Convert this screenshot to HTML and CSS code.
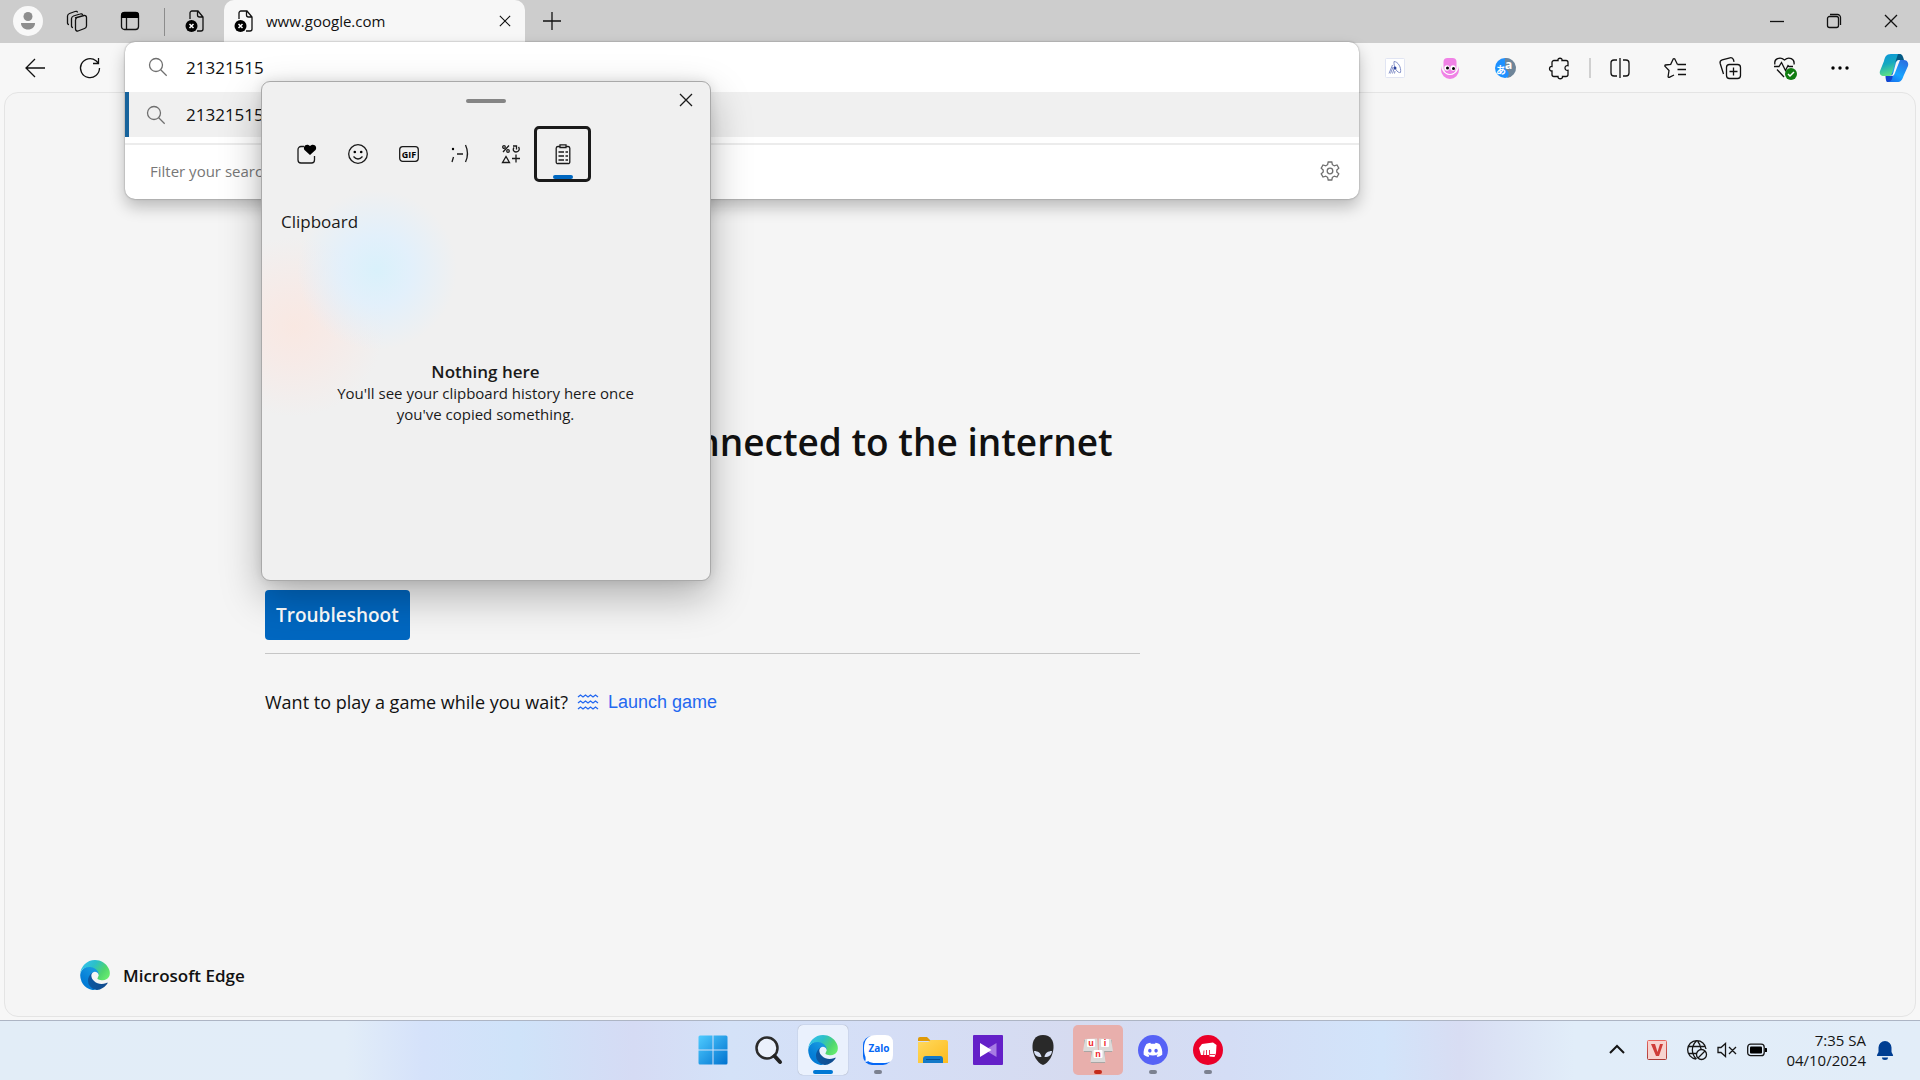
FILE: index.html
```html
<!DOCTYPE html>
<html lang="en">
<head>
<meta charset="utf-8">
<meta name="viewport" content="width=device-width, initial-scale=1">
<title>www.google.com</title>
<link rel="stylesheet" href="styles.css">
</head>
<body>
<svg class="defs" aria-hidden="true">
  <defs>
    <linearGradient id="edge-a" x1="0" y1="0" x2="1" y2="0"><stop offset="0" stop-color="#0c59a4"/><stop offset="1" stop-color="#114a8b"/></linearGradient>
    <linearGradient id="edge-b" x1="1" y1="0" x2="0.3" y2="1"><stop offset="0" stop-color="#1b9de2"/><stop offset="0.3" stop-color="#1595df"/><stop offset="0.7" stop-color="#0680d7"/><stop offset="1" stop-color="#0078d4"/></linearGradient>
    <linearGradient id="edge-c" x1="0" y1="0.2" x2="1" y2="0.7"><stop offset="0" stop-color="#35c1f1"/><stop offset="0.4" stop-color="#2cc0c8"/><stop offset="0.75" stop-color="#4fd56f"/><stop offset="1" stop-color="#66eb6e"/></linearGradient>
    <linearGradient id="win" x1="0" y1="0" x2="1" y2="1"><stop offset="0" stop-color="#4fcbff"/><stop offset="1" stop-color="#0072cf"/></linearGradient>
    <linearGradient id="folder" x1="0" y1="0" x2="1" y2="1"><stop offset="0" stop-color="#ffd95e"/><stop offset="1" stop-color="#fdbb1d"/></linearGradient>
    <linearGradient id="cop-a" x1="0" y1="0" x2="0.3" y2="1"><stop offset="0" stop-color="#0a95dc"/><stop offset="0.5" stop-color="#16a9c0"/><stop offset="1" stop-color="#5fe084"/></linearGradient>
    <linearGradient id="cop-b" x1="0.8" y1="0" x2="0.2" y2="1"><stop offset="0" stop-color="#2c6fe0"/><stop offset="0.6" stop-color="#18a4ff"/><stop offset="1" stop-color="#1670ee"/></linearGradient>
    <linearGradient id="unikey" x1="0" y1="0" x2="0" y2="1"><stop offset="0" stop-color="#e8665f"/><stop offset="1" stop-color="#a93a36"/></linearGradient>
    <symbol id="edge" viewBox="4 0 257 259">
      <path fill="url(#edge-a)" d="M235.68 195.46a93.73 93.73 0 0 1-10.54 4.71 101.87 101.87 0 0 1-35.9 6.46c-47.32 0-88.54-32.55-88.54-74.32A31.48 31.48 0 0 1 117.13 105c-42.8 1.8-53.8 46.4-53.8 72.53 0 73.88 68.09 81.37 82.76 81.37 7.91 0 19.84-2.3 27-4.56l1.31-.44a128.34 128.34 0 0 0 66.6-52.8 4 4 0 0 0-5.32-5.64Z"/>
      <path fill="url(#edge-b)" d="M110.34 246.34A79.2 79.2 0 0 1 87.6 225a80.72 80.72 0 0 1 29.53-120c3.12-1.47 8.45-4.13 15.54-4a32.35 32.35 0 0 1 25.69 13 31.88 31.88 0 0 1 6.36 18.66c0-.21 24.46-79.6-80-79.6-43.9 0-80 41.66-80 78.21a130.15 130.15 0 0 0 12.11 56 128 128 0 0 0 156.38 67.11 75.55 75.55 0 0 1-62.78-8Z"/>
      <path fill="url(#edge-c)" d="M156.94 153.78c-.81 1.05-3.3 2.5-3.3 5.66 0 2.61 1.7 5.12 4.72 7.23 14.38 10 41.49 8.68 41.56 8.68a59.56 59.56 0 0 0 30.27-8.35 61.38 61.38 0 0 0 30.43-52.88c.26-22.41-8-37.31-11.34-43.91C228.09 28.76 182.35.2 132.61.2a128 128 0 0 0-128 126.2c.48-36.54 36.8-66.05 80-66.05 3.5 0 23.46.34 42 10.07 16.34 8.58 24.9 18.94 30.85 29.21 6.18 10.67 7.28 24.15 7.28 29.52s-2.74 13.33-7.8 19.83Z"/>
    </symbol>
    <symbol id="page-error" viewBox="0 0 20 24">
      <path class="ln" d="M5 10V4a2 2 0 0 1 2-2h6l5 6v12a2 2 0 0 1-2 2h-4M12.500 2v4a2 2 0 0 0 2 2H18"/>
      <circle cx="6.500" cy="17" r="6" fill="#000"/>
      <path d="m4.500 15 4 4m0-4-4 4" stroke="#fff" stroke-width="1.500"/>
    </symbol>
    <symbol id="search" viewBox="0 0 20 20"><circle class="ln" cx="8" cy="8" r="6.500"/><path class="ln" d="m12.700 12.700 6 6"/></symbol>
    <symbol id="cross" viewBox="0 0 14 14"><path class="ln" d="m1 1 12 12M13 1 1 13"/></symbol>
  </defs>
</svg>

<header class="tabstrip">
  <button class="profile" aria-label="Profile"><svg viewBox="0 0 30 30"><circle cx="15" cy="15" r="15" fill="#f8f8f8"/><circle cx="15" cy="10.500" r="4.500" fill="#8e8e8e"/><path d="M8 17h14c0 4-3 6.500-7 6.500S8 21 8 17Z" fill="#8e8e8e"/></svg></button>
  <button class="strip-button" aria-label="Workspaces"><svg class="i22" viewBox="0 0 22 22"><path class="ln" d="m9 8 9-2.500a2 2 0 0 1 2.500 2V16a3 3 0 0 1-2 2.500L12 21a2 2 0 0 1-2.500-2V10a3 3 0 0 1 2-2.500M7 17.500c-1 0-1.500-.5-1.500-1.500V8.500a3 3 0 0 1 2-2.500L14 4c1.500-.5 2.500 0 2.500 1M3 14.500c-1 0-1.500-.5-1.500-1.500V6a3 3 0 0 1 2-2.500L9 1.500c1.500-.5 2.500 0 2.500 1"/></svg></button>
  <button class="strip-button" aria-label="Tab actions"><svg class="i20" viewBox="0 0 20 20"><rect class="ln" x="1.500" y="1.500" width="17" height="17" rx="3"/><path d="M1 7V4a3 3 0 0 1 3-3h12a3 3 0 0 1 3 3v3Z"/><path class="ln" d="M6.500 7v11"/></svg></button>
  <span class="strip-rule"></span>
  <button class="pinned-tab" aria-label="Pinned tab"><svg class="page-icon"><use href="#page-error"/></svg></button>
  <div class="tab">
    <svg class="page-icon"><use href="#page-error"/></svg>
    <span class="tab-title">www.google.com</span>
    <button class="tab-close" aria-label="Close tab"><svg class="i12 bold"><use href="#cross"/></svg></button>
  </div>
  <button class="new-tab" aria-label="New tab"><svg class="i18" viewBox="0 0 18 18"><path class="ln" d="M9 0v18M0 9h18"/></svg></button>
  <div class="window-controls">
    <button aria-label="Minimize"><svg class="i14" viewBox="0 0 14 14"><path class="ln" d="M0 7.500h14"/></svg></button>
    <button aria-label="Restore"><svg class="i14" viewBox="0 0 14 14"><rect class="ln" x=".5" y="2.500" width="11" height="11" rx="2"/><path class="ln" d="M3 .5h7.500a3 3 0 0 1 3 3V11"/></svg></button>
    <button aria-label="Close"><svg class="i14"><use href="#cross"/></svg></button>
  </div>
</header>

<nav class="toolbar">
  <button aria-label="Back"><svg class="i20" viewBox="0 0 20 20"><path class="ln" d="M20 10H1m9-9-9 9 9 9"/></svg></button>
  <button aria-label="Refresh"><svg class="i22" viewBox="0 0 22 22"><path class="ln" d="M20.500 11A9.500 9.500 0 1 1 17 3.700l2 2M19.500 1v5.500H14"/></svg></button>
  <div class="address">
    <div class="omnibox">
      <div class="omni-row">
        <svg class="i20 grey"><use href="#search"/></svg>
        <input type="text" value="21321515" aria-label="Search or enter web address">
      </div>
      <a class="omni-row suggestion" href="#"><svg class="i20 grey"><use href="#search"/></svg>21321515</a>
      <div class="omni-footer">
        <span>Filter your search</span>
        <button aria-label="Suggestion settings"><svg class="i20 grey" viewBox="0 0 20 20"><circle class="ln" cx="10" cy="10" r="2.800"/><path class="ln" d="M8.200 1h3.600l.6 2.700 1.900 1.100 2.700-.8 1.800 3.100-2 1.900v2l2 1.900-1.800 3.100-2.700-.8-1.900 1.100-.6 2.700H8.200l-.6-2.700-1.900-1.100-2.700.8-1.800-3.100 2-1.900V9l-2-1.900L3 4l2.700.8 1.900-1.100Z"/></svg></button>
      </div>
    </div>
  </div>
  <button aria-label="Reader extension"><svg class="i20" viewBox="0 0 20 20"><rect x=".5" y=".5" width="19" height="19" rx="1" fill="#fff" stroke="#e1e5f3"/><path d="M9 3.500c4 0 7.500 6 6.500 11-3 1-7-5-6.500-11ZM7.500 7 4 15.500M8 9l-2.500 6.500M9 11l-1.500 4.500M10 13l-.5 2.500" fill="none" stroke="#8491c8"/><circle cx="10" cy="10" r="1.500" fill="#2c429c"/></svg></button>
  <button aria-label="Voice extension"><svg class="i20" viewBox="0 0 20 20"><path d="M1 8a9 9 0 0 0 18 0v4a9 9 0 0 1-18 0Z" fill="#f082e6"/><path d="M8 17h4v3H8Z" fill="#f082e6"/><path d="M3.500 4a4 4 0 0 1 4-4h5a4 4 0 0 1 4 4v5c0 5-3 7-6.500 7s-6.500-2-6.500-7Z" fill="#f082e6"/><circle cx="7" cy="10" r="2.700" fill="#fff"/><circle cx="13" cy="10" r="2.700" fill="#fff"/><circle cx="7.500" cy="10" r="1.500"/><circle cx="13.500" cy="10.500" r="1.500"/><path d="M3.500 11.500q1.500 5 6.500 5t6.500-5" stroke="#fff" fill="none"/></svg></button>
  <button aria-label="Translate extension"><svg class="i20" viewBox="0 0 20 20"><circle cx="10" cy="10" r="10" fill="#1e90ff"/><path d="M10 0a10 10 0 0 1 2 20c3-4 2-7-2-9Z" fill="#6f8599"/><text class="kana" x="1" y="16">あ</text><text class="latin" x="10" y="11">a</text></svg></button>
  <button aria-label="Extensions"><svg class="i22" viewBox="0 0 22 22"><path class="ln" d="M5 3.500h4C8.300.5 13.700.5 13 3.500h4a2 2 0 0 1 2 2v3.200c-4-1-4 5.600 0 4.600v4.200a2 2 0 0 1-2 2h-3.500c.5 3-5 3-4.500 0H5a2 2 0 0 1-2-2V14c-3.300.4-3.300-5 0-4.500v-4a2 2 0 0 1 2-2Z"/></svg></button>
  <span class="tool-rule"></span>
  <button aria-label="Split screen"><svg class="i20" viewBox="0 0 20 20"><path class="ln" d="M7 2H4a3 3 0 0 0-3 3v10a3 3 0 0 0 3 3h3M13 2h3a3 3 0 0 1 3 3v10a3 3 0 0 1-3 3h-3M10 0v20"/></svg></button>
  <button aria-label="Favorites"><svg class="i22" viewBox="0 0 22 22"><path class="ln" d="m13.500 7.500-2.700-5.500a1 1 0 0 0-1.600 0L6.700 7.300 1.500 8a.8.800 0 0 0-.4 1.400L5 13.500l-.9 6a.8.800 0 0 0 1.200.8L10 18M13.500 7.500H22M13.500 12.500H22M14 17.500h8"/></svg></button>
  <button aria-label="Collections"><svg class="i22" viewBox="0 0 22 22"><rect class="ln" x="7.500" y="7.500" width="14" height="14" rx="3"/><path class="ln" d="M14.500 10.500v8m-4-4h8M4.500 17 1.200 6.500a3 3 0 0 1 2-3.700L11 .8a3 3 0 0 1 3.500 2l.5 2"/></svg></button>
  <button aria-label="Browser essentials"><svg class="i24" viewBox="0 0 24 24"><path class="ln" d="M2 8.500C.5 3 7 0 11.500 4 16 0 22 3 21 8.500M1 10.500h5l2.500-4 4 8 2.500-5 1 1h4M4 13.500l7 7.500"/><circle cx="18" cy="18" r="6" fill="#107c10"/><path d="m15 18 2 2 4-4" fill="none" stroke="#fff" stroke-width="1.500"/></svg></button>
  <button aria-label="Settings and more"><svg class="i18" viewBox="0 0 18 18"><circle cx="2" cy="9" r="1.700"/><circle cx="9" cy="9" r="1.700"/><circle cx="16" cy="9" r="1.700"/></svg></button>
  <button class="copilot" aria-label="Copilot"><svg class="i30" viewBox="0 0 30 30"><path d="M21 1h-9C7 1 6 4 5 8L1 18c-1 3 1 5 4 5h5c3 0 4-2 5-5l4-12c1-2 2-2 4-2-.5-2-1-3-2-3Z" fill="url(#cop-a)"/><path d="M19 1h2c2 0 3 2 4 6h-5c-2 0-3 1-4 3Z" fill="#055a85"/><path d="M8 29h10c4 0 5-2 6.500-6L29 13c1-3-1-6-4-6h-4c-3 0-4 1-5 4l-4 12c-1 2-2 2-5 1 .5 3 .5 4 1 5Z" fill="url(#cop-b)"/><path d="M9 23h3l3-5-2 8c-1 2-2 3-5 3-1-1-1.500-4-1.500-6Z" fill="#1444ce"/><path d="M17 9.500c1-2 2-2.500 4-2.500l-5.500 14c-1 2-2 2-4 2 2-1 2.500-2 3-4Z" fill="#f7f7f7"/></svg></button>
</nav>

<main class="page">
  <section class="message">
    <h1>Right now, you're not connected to the internet</h1>
    <button class="troubleshoot">Troubleshoot</button>
    <p class="game">Want to play a game while you wait?
      <a href="#"><svg class="waves" viewBox="0 0 20 16"><path class="ln" d="m0 3 2.500-2L5 3l2.500-2L10 3l2.500-2L15 3l2.500-2L20 3M0 9l2.500-2L5 9l2.500-2L10 9l2.500-2L15 9l2.500-2L20 9M0 15l2.500-2L5 15l2.500-2L10 15l2.500-2L15 15l2.500-2L20 15"/></svg>Launch game</a></p>
  </section>
  <footer class="brand"><svg class="i30"><use href="#edge"/></svg>Microsoft Edge</footer>
</main>

<section class="panel" aria-label="Clipboard">
  <span class="handle"></span>
  <button class="panel-close" aria-label="Close"><svg class="i14"><use href="#cross"/></svg></button>
  <div class="panel-tabs">
    <button aria-label="Recent"><svg class="i20" viewBox="0 0 20 20"><path class="ln" d="M7 2.500H4a3 3 0 0 0-3 3V16a3 3 0 0 0 3 3h10.500a3 3 0 0 0 3-3v-4"/><path d="M13 11 7.500 6C5.500 3 9-1.500 13 2c4-3.500 7.800 1 5.500 4Z"/></svg></button>
    <button aria-label="Emoji"><svg class="i20" viewBox="0 0 20 20"><circle class="ln" cx="10" cy="10" r="9.300"/><circle cx="6.800" cy="8" r="1.300"/><circle cx="13.200" cy="8" r="1.300"/><path class="ln" d="M5.500 12.500q4.500 5 9 0"/></svg></button>
    <button aria-label="GIF"><svg class="i20" viewBox="0 0 20 20"><rect class="ln" x=".7" y="2.700" width="18.600" height="14.600" rx="3"/><text class="gif" x="10" y="13.500">GIF</text></svg></button>
    <button aria-label="Kaomoji"><svg class="i20" viewBox="0 0 20 20"><circle cx="3" cy="5" r="1.200"/><path class="ln" d="M3.500 13 2 18M7 10h6M15.500 1q4 8.500 0 17"/></svg></button>
    <button aria-label="Symbols"><svg class="i20" viewBox="0 0 20 20"><path class="ln" d="m2 8 6-6.500M1.500 18.500h7l-3.500-6ZM11 14.500h8m-4-4v8M12 2h3.500v3.500M13 3.500c-1.500 2-.5 4.500 2 4.500 3 0 4-3 2.500-5"/><circle class="ln" cx="3" cy="3" r="1.300"/><circle class="ln" cx="7" cy="7" r="1.300"/></svg></button>
    <button class="selected" aria-label="Clipboard history"><svg class="i20" viewBox="0 0 20 20"><path class="ln" d="M6.500 2.500H5A1.800 1.800 0 0 0 3.200 4v14A1.500 1.500 0 0 0 5 19.500h10a1.500 1.500 0 0 0 1.800-1.500V4A1.800 1.800 0 0 0 15 2.500h-1.500M7 .8h6v2.700H7ZM5.500 8H11M5.500 12H11M5.500 16H11M12.500 8h2.500M12.500 12h2.500M12.500 16h2.500"/></svg></button>
  </div>
  <h2>Clipboard</h2>
  <div class="empty"><strong>Nothing here</strong><p>You'll see your clipboard history here once you've copied something.</p></div>
</section>

<footer class="taskbar">
  <div class="apps">
    <button aria-label="Start"><svg class="i30" viewBox="0 0 30 30"><path d="M2 .5h12.500v14H.5V2A1.500 1.500 0 0 1 2 .5ZM15.500.5H28A1.500 1.500 0 0 1 29.500 2v12.500h-14ZM.5 15.500h14v14H2A1.500 1.500 0 0 1 .5 28ZM15.500 15.500h14V28a1.500 1.500 0 0 1-1.500 1.500H15.500Z" fill="url(#win)"/></svg></button>
    <button aria-label="Search"><svg class="i30" viewBox="0 0 30 30"><circle cx="14" cy="13" r="10.500" fill="#fff8" stroke="#2b2b2b" stroke-width="2.500"/><path d="m21.500 21 5.500 6" stroke="#222" stroke-width="4" stroke-linecap="round"/></svg></button>
    <button class="active" aria-label="Microsoft Edge"><svg class="i30"><use href="#edge"/></svg></button>
    <button class="running" aria-label="Zalo"><svg class="i30" viewBox="0 0 30 30"><rect y="1" width="29" height="29" rx="9" fill="#0567f5"/><path d="M14 0h8q8 0 8 8v12q0 8-8 8h-9c-4 0-6-.5-8-2-1 1-2 1-3 .5Q3 25 2.500 22 1 19 1 13 1 0 14 0Z" fill="#fff"/><text class="zalo" x="16" y="17">Zalo</text></svg></button>
    <button aria-label="File Explorer"><svg class="i30" viewBox="0 0 30 30"><path d="M0 4a2 2 0 0 1 2-2h7l4 4H0Z" fill="#e09a06"/><path d="M0 7h10l3-2h15a2 2 0 0 1 2 2v21H0Z" fill="url(#folder)"/><path d="M5 28v-4a3 3 0 0 1 3-3h14a3 3 0 0 1 3 3v4Z" fill="#1479c7"/><path d="M8 24.500h14" stroke="#064e91"/></svg></button>
    <button aria-label="Media player"><svg class="i30" viewBox="0 0 30 30"><rect width="30" height="30" rx="1" fill="#6420c8"/><path d="M23.500 8v14L12 15Z" fill="#a77be4"/><path d="M7 8v14l11.500-7Z" fill="#fff"/></svg></button>
    <button aria-label="Alienware"><svg class="i30" viewBox="0 0 30 30"><path d="M15 0C7 0 4 6 4.500 13 5 20 9 28 15 30c6-2 10-10 10.500-17C26 6 23 0 15 0Z" fill="#292929"/><path d="M6 16c4 0 7 2 7.500 6-5 0-7-2-7.500-6ZM24 16c-4 0-7 2-7.500 6 5 0 7-2 7.500-6Z" fill="#d8e0f5"/></svg></button>
    <button class="alert" aria-label="UniKey"><svg class="i30" viewBox="0 0 30 30"><g fill="#a9a6a4"><path d="M1 5h13v12H1ZM16 5h13v12H16ZM8 16h14v12H8Z"/></g><g fill="#dcdad9"><path d="m2 4 12-.5L15 16H0ZM16 3.500 28 4l2 12H16ZM9 15h12l1.500 12h-15Z"/></g><g fill="#fff"><rect x="4" y="4" width="8" height="8" rx="1"/><rect x="18" y="4" width="8" height="8" rx="1"/><rect x="10.500" y="15" width="9" height="8" rx="1"/></g><text class="key" x="8" y="11">u</text><text class="key" x="22" y="11">i</text><text class="key" x="15" y="22">n</text></svg></button>
    <button class="running" aria-label="Discord"><svg class="i30" viewBox="0 0 30 30"><circle cx="15" cy="15" r="15" fill="#5662f6"/><path transform="translate(5.600 5.600) scale(.78)" fill="#fff" d="M20.317 4.370a19.791 19.791 0 0 0-4.885-1.515.74.074 0 0 0-.079.037c-.211.375-.445.865-.608 1.250-1.845-.276-3.680-.276-5.487 0-.164-.393-.406-.874-.618-1.250a.077.077 0 0 0-.079-.037 19.736 19.736 0 0 0-4.885 1.515.070.070 0 0 0-.032.028C.533 9.046-.319 13.580.099 18.058a.082.082 0 0 0 .031.056c2.053 1.508 4.041 2.423 5.993 3.029a.078.078 0 0 0 .084-.028c.462-.630.873-1.295 1.226-1.994a.076.076 0 0 0-.042-.106c-.653-.248-1.274-.550-1.872-.892a.077.077 0 0 1-.008-.128l.372-.291a.074.074 0 0 1 .078-.011c3.928 1.793 8.180 1.793 12.061 0a.074.074 0 0 1 .079.010l.373.292a.077.077 0 0 1-.007.128 12.299 12.299 0 0 1-1.873.891.077.077 0 0 0-.041.107c.360.698.772 1.363 1.225 1.993a.076.076 0 0 0 .084.029c1.961-.607 3.950-1.522 6.002-3.029a.077.077 0 0 0 .031-.055c.500-5.177-.838-9.674-3.549-13.660ZM8.020 15.331c-1.183 0-2.157-1.086-2.157-2.419s.956-2.419 2.157-2.419c1.211 0 2.176 1.095 2.157 2.419 0 1.333-.956 2.419-2.157 2.419Zm7.975 0c-1.183 0-2.157-1.086-2.157-2.419s.955-2.419 2.157-2.419c1.211 0 2.176 1.095 2.157 2.419 0 1.333-.946 2.419-2.157 2.419Z"/></svg></button>
    <button class="running" aria-label="Game client"><svg class="i30" viewBox="0 0 30 30"><circle cx="15" cy="15" r="15" fill="#eb0029"/><path d="m6 13 3-4 11-1.500L23.500 10l-.5 8-1.500 4-5-.5V20H8Z" fill="#fff"/><path d="m10.500 20.500.5-5M13.500 20.500V15M16.500 20v-5M17 19.500h5" fill="none" stroke="#eb0029" stroke-width=".8"/></svg></button>
  </div>
  <div class="tray">
    <button class="overflow" aria-label="Show hidden icons"><svg class="i14" viewBox="0 0 14 14"><path class="ln bold" d="m0 10 7-7 7 7"/></svg></button>
    <button class="unikey" aria-label="Vietnamese input"><svg class="i20" viewBox="0 0 20 20"><rect x=".5" y=".5" width="19" height="19" rx="1" fill="#f7d3cf" stroke="url(#unikey)"/><path d="M4 4h4l2.500 8L13 4h3l-4 12H9Z" fill="#cf3d38"/></svg></button>
    <button class="status" aria-label="Network, volume and battery">
      <svg class="i20" viewBox="0 0 20 20"><path class="ln" d="M19 9A9.200 9.200 0 1 0 9 19M1.500 6.500h17M1.500 13.500H9M9.500 1c-5.500 5-5.500 13 0 18M10.500 1q3 3.500 3.500 8"/><circle class="ln" cx="14.500" cy="14.500" r="5"/><path class="ln" d="m11 18 7-7"/></svg>
      <svg class="i20" viewBox="0 0 20 20"><path class="ln" d="M1 7.500h3l4.500-4v13L4 12.500H1ZM12 7l7 7m0-7-7 7"/></svg>
      <svg class="i20" viewBox="0 0 20 20"><rect class="ln" x=".7" y="4.200" width="16.500" height="11.500" rx="3"/><rect x="3" y="6.500" width="12" height="7" rx="1"/><path d="M18 8h1.500a.5.500 0 0 1 .5.500v3a.5.500 0 0 1-.5.500H18Z"/></svg>
    </button>
    <button class="clock"><time>7:35 SA</time><time>04/10/2024</time></button>
    <button class="bell" aria-label="Notifications"><svg class="i20" viewBox="0 0 20 20"><path d="M10 1a6.500 6.500 0 0 1 6.500 6.500V12l1.500 3a.7.700 0 0 1-.5 1h-15A.7.700 0 0 1 2 15l1.500-3V7.500A6.500 6.500 0 0 1 10 1ZM7 17.500h6a3 2.500 0 0 1-6 0Z" fill="#003e92"/></svg></button>
  </div>
</footer>
</body>
</html>
```
FILE: styles.css
```css
* { box-sizing: border-box; margin: 0; padding: 0; }
body {
  display: flex;
  flex-direction: column;
  min-height: 100vh;
  position: relative;
  background: #f7f7f7;
  color: #111;
  font-family: "Open Sans", "Noto Sans", sans-serif;
  font-size: 17px;
}
button {
  display: flex;
  align-items: center;
  justify-content: center;
  border: 0;
  background: none;
  color: inherit;
  font: inherit;
}
svg { display: block; flex: none; overflow: visible; }
a { text-decoration: none; color: inherit; }
.defs { position: absolute; width: 0; height: 0; }
.ln { fill: none; stroke: currentColor; stroke-width: 1.3; }
.bold, .bold .ln { stroke-width: 2; }
.i12 { width: 12px; height: 12px; }
.i14 { width: 14px; height: 14px; }
.i18 { width: 18px; height: 18px; }
.i20 { width: 20px; height: 20px; }
.i22 { width: 22px; height: 22px; }
.i24 { width: 24px; height: 24px; }
.i30 { width: 30px; height: 30px; }
.grey { color: #707070; }

/* Tab strip */
.tabstrip { display: flex; align-items: flex-start; height: 43px; background: #cdcdcd; }
.tabstrip button { height: 42px; }
.profile { width: 30px; margin: 0 9px 0 13px; }
.profile svg { width: 30px; height: 30px; }
.strip-button { width: 49px; margin-right: 4px; }
.strip-rule { width: 1px; height: 28px; margin: 8px 0 0 6px; background: #8c8c8c; }
.pinned-tab { width: 59px; }
.page-icon { width: 20px; height: 24px; }
.tab {
  display: flex;
  align-items: center;
  width: 301px;
  height: 43px;
  padding: 0 10px 2px;
  border-radius: 10px 10px 0 0;
  background: #f7f7f7;
}
.tab-title { flex: 1; margin-left: 12px; font-size: 15px; }
.tab-close { width: 20px; }
.new-tab { width: 54px; }
.window-controls { display: flex; margin: 0 1px 0 auto; }
.window-controls button { width: 57px; }

/* Toolbar */
.toolbar { display: flex; align-items: center; height: 49px; padding-left: 7px; }
.toolbar > button { width: 55px; height: 40px; }
.toolbar > .copilot { width: 53px; }
.tool-rule { width: 2px; height: 20px; margin: 0 1px 0 2px; background: #d0d0d0; }
.address { flex: 1; align-self: stretch; position: relative; margin: 0 8px; }
.omnibox {
  position: absolute;
  z-index: 2;
  top: -1px;
  left: 0;
  right: 0;
  overflow: hidden;
  border-radius: 10px;
  background: #fff;
  box-shadow: 0 0 2px rgba(0, 0, 0, .4), 0 8px 16px rgba(0, 0, 0, .24);
}
.omni-row { display: flex; align-items: center; gap: 18px; height: 50px; padding: 0 23px; }
.omni-row input { flex: 1; border: 0; outline: 0; background: none; color: #111; font: inherit; }
.suggestion { height: 45px; padding-left: 17px; border-left: 4px solid #17639c; background: #f0f0f0; gap: 20px; }
.omni-footer {
  display: flex;
  align-items: center;
  justify-content: space-between;
  height: 56px;
  margin-top: 6px;
  padding: 0 19px 2px 25px;
  border-top: 2px solid #ececec;
  color: #777;
  font-size: 15px;
}

/* Page */
.page {
  display: flex;
  flex: 1;
  flex-direction: column;
  justify-content: space-between;
  margin: 0 4px 3px;
  padding: 321px 70px 21px 75px;
  border: 1px solid #e4e4e4;
  border-radius: 14px;
  background: #f5f5f5;
}
.message { width: 50%; max-width: 875px; margin-left: 185px; }
.message h1 { font-size: 37px; font-weight: 600; line-height: 56px; white-space: nowrap; }
.troubleshoot {
  height: 50px;
  margin-top: 120px;
  padding: 0 11px;
  border-radius: 4px;
  background: #0067c0;
  color: #fff;
  font-size: 19px;
  font-weight: 600;
}
.game {
  display: flex;
  align-items: center;
  gap: 10px;
  margin-top: 13px;
  padding-top: 34px;
  border-top: 1px solid #c6c6c6;
  font-size: 18px;
  line-height: 28px;
}
.game a { display: flex; align-items: center; gap: 10px; color: #2368f0; font-family: "Liberation Sans", Arial, sans-serif; }
.waves { width: 20px; height: 16px; }
.brand { display: flex; align-items: center; gap: 13px; height: 40px; font-size: 17px; font-weight: 600; }

/* Clipboard panel */
.panel {
  position: absolute;
  z-index: 3;
  top: 81px;
  left: 261px;
  width: 450px;
  height: 500px;
  padding: 44px 20px 20px 19px;
  border: 1px solid #a9a9a9;
  border-radius: 9px;
  background:
    radial-gradient(circle at 115px 188px, #d9f1fb 0, rgba(225, 240, 252, .9) 35px, rgba(240, 240, 240, 0) 80px),
    radial-gradient(circle at 32px 245px, #f9e8e2 0, rgba(248, 233, 229, .8) 35px, rgba(240, 240, 240, 0) 90px),
    #f0f0f0;
  box-shadow: 0 16px 40px rgba(0, 0, 0, .28), 0 0 12px rgba(0, 0, 0, .1);
  color: #1a1a1a;
}
.handle { position: absolute; top: 17px; left: 50%; width: 40px; height: 4px; margin-left: -20px; border-radius: 2px; background: #858585; }
.panel-close { position: absolute; top: 1px; right: 7px; width: 34px; height: 34px; }
.panel-tabs { display: flex; }
.panel-tabs button { width: 51px; height: 56px; }
.panel-tabs .selected { position: relative; width: 57px; margin-left: -2px; border: 3px solid #1a1a1a; border-radius: 5px; }
.selected::after { content: ""; position: absolute; bottom: 0; width: 20px; height: 4px; border-radius: 2px; background: #0067c0; }
.panel h2 { margin-top: 27px; font-size: 17px; font-weight: 400; line-height: 26px; }
.empty { margin: 126px auto 0; width: 310px; text-align: center; font-size: 15px; line-height: 21px; }
.empty strong { font-size: 17px; font-weight: 600; line-height: 22px; }

/* Taskbar */
.taskbar {
  display: grid;
  grid-template-columns: 1fr auto 1fr;
  align-items: center;
  height: 60px;
  padding-bottom: 2px;
  border-top: 1px solid #adb5c4;
  background: linear-gradient(90deg, #e2edf7 0, #e2edf8 18%, #d5e2fa 22%, #cfe3f9 27%, #d5dbf4 33%, #d4e2f8 38%, #d5def6 46%, #d6dbf0 56%, #d4ddf5 64%, #d2e4fa 72%, #d8ddf3 76%, #e1edf9 82%, #e2edf8 100%);
}
.apps { grid-column: 2; display: flex; align-items: center; gap: 5px; }
.apps button { position: relative; width: 50px; height: 50px; border-radius: 5px; }
.apps .active { background: #eaf1fd; box-shadow: 0 0 1px rgba(0, 0, 0, .4); }
.apps .alert { background: #e8afac; }
.apps .active::after, .apps .running::after, .apps .alert::after {
  content: ""; position: absolute; bottom: 1px; width: 8px; height: 4px; border-radius: 2px; background: #7b8190;
}
.apps .active::after { width: 20px; background: #0078d4; }
.apps .alert::after { background: #c42b1c; }
.tray { display: flex; align-items: center; justify-content: flex-end; padding-right: 25px; color: #151515; }
.overflow { width: 34px; height: 40px; }
.unikey { width: 46px; height: 40px; }
.status { gap: 10px; width: 92px; height: 40px; margin-left: 1px; }
.clock { flex-direction: column; align-items: flex-end; margin-left: 13px; font-size: 15px; line-height: 20px; }
.bell { width: 20px; height: 40px; margin-left: 9px; }

/* Lettering inside icons */
.kana { font: 700 10px "Noto Sans CJK JP", sans-serif; fill: #fff; }
.latin { font: 700 12px "Open Sans", sans-serif; fill: #fff; }
.gif { font: 700 9px "Open Sans", sans-serif; text-anchor: middle; }
.zalo { font: 700 10px "Open Sans", sans-serif; text-anchor: middle; fill: #0567f5; }
.key { font: 700 9px "Liberation Sans", sans-serif; text-anchor: middle; fill: #f0262b; }
```
